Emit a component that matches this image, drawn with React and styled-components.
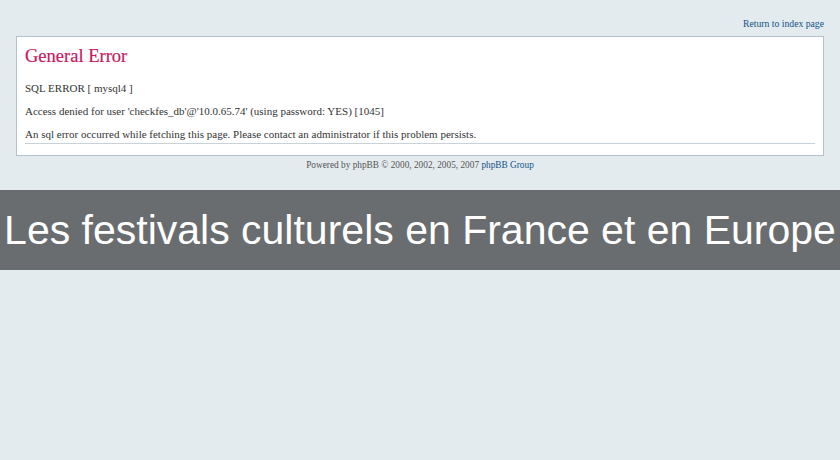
import React from "react";
import styled, { createGlobalStyle } from "styled-components";

const GlobalStyle = createGlobalStyle`
  body {
    margin: 0;
    background: #e4ebee;
    font-family: "Liberation Serif", serif;
  }
`;

const App = () => {
  return (
    <>
      <GlobalStyle />
      <Page>
        <TopBar>
          <Link href="#">Return to index page</Link>
        </TopBar>
        <Panel>
          <Title>General Error</Title>
          <Line>SQL ERROR [ mysql4 ]</Line>
          <Line>
            Access denied for user 'checkfes_db'@'10.0.65.74' (using password:
            YES) [1045]
          </Line>
          <Line>
            An sql error occurred while fetching this page. Please contact an
            administrator if this problem persists.
          </Line>
          <Rule />
        </Panel>
        <Footer>
          Powered by phpBB © 2000, 2002, 2005, 2007 <Link href="#">phpBB Group</Link>
        </Footer>
      </Page>
      <Banner>
        <BannerText>Les festivals culturels en France et en Europe</BannerText>
      </Banner>
    </>
  );
};

const Page = styled.div`
  height: 190px;
  padding: 0 16px;
  box-sizing: border-box;
`;

const TopBar = styled.div`
  height: 36px;
  display: flex;
  justify-content: flex-end;
  align-items: flex-end;
  padding-bottom: 7px;
  box-sizing: border-box;
  font-size: 9.7px;
`;

const Link = styled.a`
  color: #105289;
  text-decoration: none;
`;

const Panel = styled.div`
  background: #ffffff;
  border: 1px solid #b4c2cb;
  padding: 9px 8px 12px;
  height: 120px;
  box-sizing: border-box;
`;

const Title = styled.h2`
  margin: 0 0 15px;
  font-size: 18.5px;
  font-weight: normal;
  color: #c8195f;
  line-height: 20px;
  -webkit-text-stroke: 0.2px #c8195f;
`;

const Line = styled.p`
  margin: 0 0 9px;
  font-size: 11px;
  line-height: 14px;
  color: #333333;
`;

const Rule = styled.hr`
  border: 0;
  border-top: 1px solid #c9d2d8;
  margin: -7px 0 0;
`;

const Footer = styled.div`
  text-align: center;
  font-size: 9.3px;
  color: #555;
  padding-top: 4px;
`;

const Banner = styled.div`
  height: 80px;
  background: #6a6d6f;
  display: flex;
  align-items: center;
  justify-content: center;
  overflow: hidden;
`;

const BannerText = styled.span`
  font-family: "Liberation Sans", Arial, sans-serif;
  font-size: 41px;
  color: #ffffff;
  white-space: nowrap;
`;

export default App;
